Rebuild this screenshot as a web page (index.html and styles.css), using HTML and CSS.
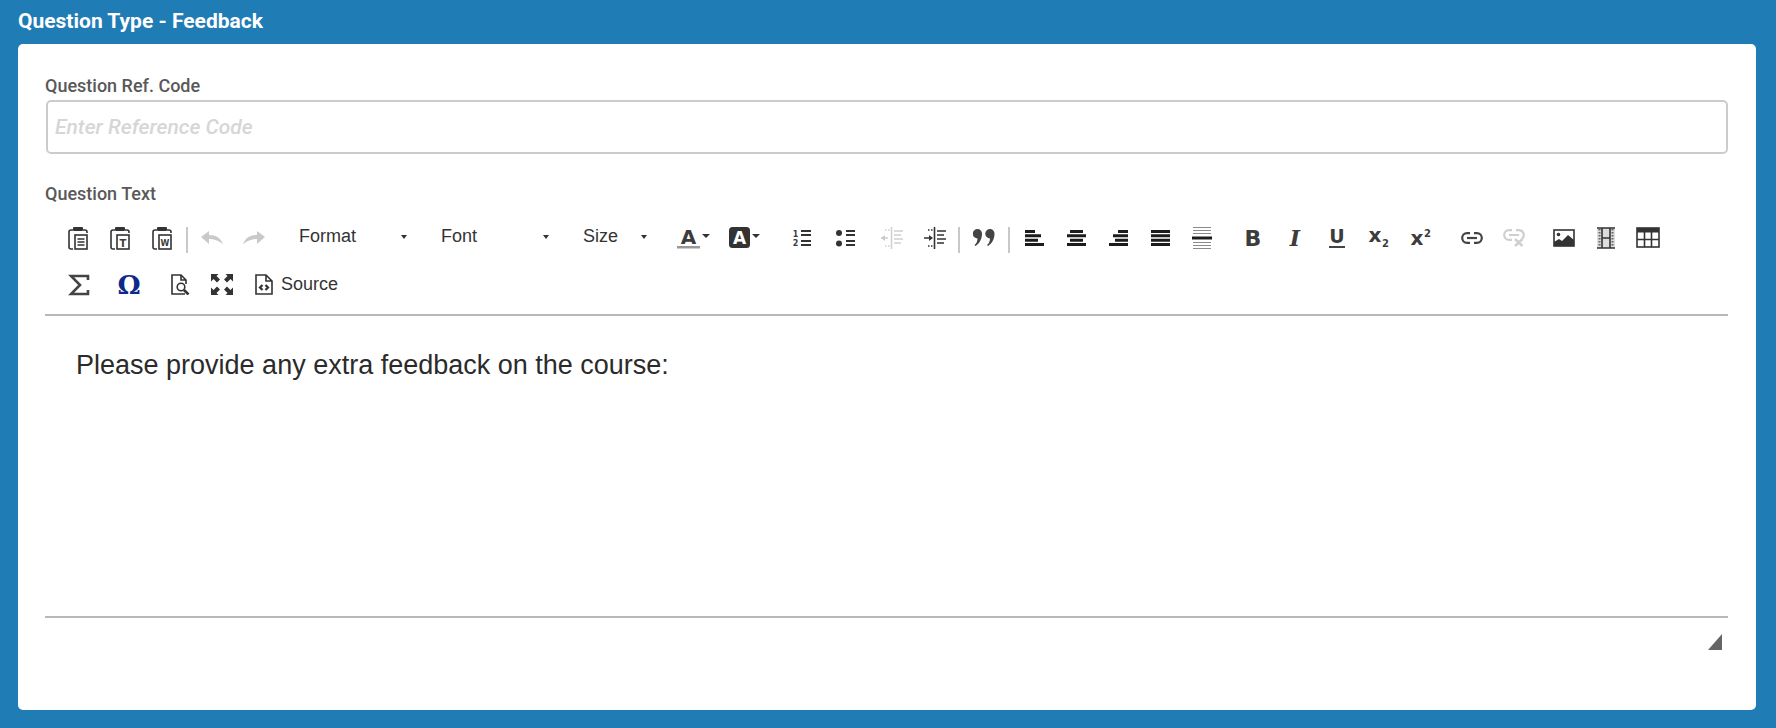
FILE: index.html
```html
<!DOCTYPE html>
<html lang="en">
<head>
    <meta charset="UTF-8">
    <title>Question Type - Feedback</title>
    <link rel="stylesheet" href="styles.css">
</head>
<body>
    <header class="page-title">Question Type - Feedback</header>
    <main class="card">
        <div class="field">
            <label for="ref-code">Question Ref. Code</label>
            <input type="text" id="ref-code" placeholder="Enter Reference Code">
        </div>
        <div class="field-label">Question Text</div>
        <div class="editor">
            <div class="toolbar">
                <div class="tb-row">
                    <span class="btn"><svg width="24" height="26" viewBox="0 0 24 26"><path class="ln" d="M6 5H4a2 2 0 0 0-2 2v15a2 2 0 0 0 2 2h2M16 5h2a2 2 0 0 1 2 2v1"/><rect class="fl" x="6" y="2" width="10" height="4" rx="1"/><rect class="ln" x="8" y="10" width="12" height="14"/><path class="ln" d="M10.500 14h7M10.500 17h7M10.500 20h7"/></svg></span>
                    <span class="btn"><svg width="24" height="26" viewBox="0 0 24 26"><path class="ln" d="M6 5H4a2 2 0 0 0-2 2v15a2 2 0 0 0 2 2h2M16 5h2a2 2 0 0 1 2 2v1"/><rect class="fl" x="6" y="2" width="10" height="4" rx="1"/><rect class="ln" x="8" y="10" width="12" height="14"/><text class="gl" x="14" y="21.500" font-size="10" text-anchor="middle">T</text></svg></span>
                    <span class="btn"><svg width="24" height="26" viewBox="0 0 24 26"><path class="ln" d="M6 5H4a2 2 0 0 0-2 2v15a2 2 0 0 0 2 2h2M16 5h2a2 2 0 0 1 2 2v1"/><rect class="fl" x="6" y="2" width="10" height="4" rx="1"/><rect class="ln" x="8" y="10" width="12" height="14"/><text class="gl" x="14" y="21" font-size="8" text-anchor="middle">W</text></svg></span>
                    <span class="sep sep-a"></span>
                    <span class="btn"><svg width="22" height="14" viewBox="0 0 22 14"><path class="off" d="M0 6 8 0v4c7 0 12 3 14 9.500C18 9.500 13 8 8 8v5z"/></svg></span>
                    <span class="btn"><svg width="22" height="14" viewBox="0 0 22 14"><path class="off" d="M22 6 14 0v4C7 4 2 7 0 13.500 4 9.500 9 8 14 8v5z"/></svg></span>
                    <span class="combo combo-format">Format<i class="caret"></i></span>
                    <span class="combo combo-font">Font<i class="caret"></i></span>
                    <span class="combo combo-size">Size<i class="caret"></i></span>
                    <span class="color-btn color-text"><svg width="23" height="30" viewBox="0 -4 23 30"><text class="gl" x="11.500" y="17" font-size="20" text-anchor="middle">A</text><rect x="0" y="19" width="23" height="2.500" fill="#999"/></svg><i class="caret"></i></span>
                    <span class="color-btn color-bg"><svg width="21" height="21" viewBox="0 0 21 21"><rect width="21" height="21" rx="3.500" fill="#333"/><text x="10.500" y="16.500" font-size="17" text-anchor="middle" class="gl gl-white">A</text></svg><i class="caret"></i></span>
                    <span class="btn"><svg width="18" height="18" viewBox="0 0 18 18"><text class="gl" x="2.500" y="7.500" font-size="8" text-anchor="middle">1</text><text class="gl" x="2.500" y="17" font-size="8" text-anchor="middle">2</text><path class="ln2" d="M8 2h10M8 6h10M8 12h10M8 16h10"/></svg></span>
                    <span class="btn btn-ul"><svg width="19" height="18" viewBox="0 0 19 18"><circle class="fl" cx="3" cy="4" r="3"/><circle class="fl" cx="3" cy="14.500" r="3"/><path class="ln2" d="M10 2h9M10 6h9M10 12h9M10 16h9"/></svg></span>
                    <span class="btn btn-outdent"><svg width="22" height="22" viewBox="0 0 22 22"><path class="ln-off" d="M10.500 0v22M13 4h9M13 8h7M13 12h9M13 16h7M0 11h7"/><path class="off" d="M0 11l4-3v6z"/><path class="ln-off dots" d="M4 3h5M4 19h5"/></svg></span>
                    <span class="btn btn-indent"><svg width="22" height="22" viewBox="0 0 22 22"><path class="ln" d="M10.500 0v22M13 4h9M13 8h7M13 12h9M13 16h7M0 11h6"/><path class="fl" d="M9 11l-4-3v6z"/><path class="ln dots" d="M4 3h5M4 19h5"/></svg></span>
                    <span class="sep sep-b"></span>
                    <span class="btn btn-quote"><svg width="22" height="17" viewBox="0 0 22 17"><path class="quote" d="M4.500 0a4.500 4.500 0 0 1 4.500 4.800C9 10.500 6 15 2.500 17L1.500 16c2-1.500 3-4 3-6.500a4.700 4.700 0 0 1 0-9.500zM17 0a4.500 4.500 0 0 1 4.500 4.800c0 5.700-3 10.200-6.500 12.200L14 16c2-1.500 3-4 3-6.500A4.700 4.700 0 0 1 17 0z"/></svg></span>
                    <span class="sep sep-c"></span>
                    <span class="btn btn-left"><svg width="19" height="16" viewBox="0 0 19 16"><path class="bar" d="M0 1.500h10M0 5.800h16M0 10.200h13M0 14.500h19"/></svg></span>
                    <span class="btn"><svg width="19" height="16" viewBox="0 0 19 16"><path class="bar" d="M3 1.500h13M0 5.800h19M3 10.200h13M0 14.500h19"/></svg></span>
                    <span class="btn"><svg width="19" height="16" viewBox="0 0 19 16"><path class="bar" d="M9 1.500h10M4 5.800h15M6 10.200h13M0 14.500h19"/></svg></span>
                    <span class="btn"><svg width="19" height="16" viewBox="0 0 19 16"><path class="bar" d="M0 1.500h19M0 5.800h19M0 10.200h19M0 14.500h19"/></svg></span>
                    <span class="btn"><svg width="20" height="22" viewBox="0 0 20 22"><path class="thin" d="M1 .5h18M1 3.500h18M1 6.500h18M1 15.500h18M1 18.500h18M1 21.500h18"/><path class="bar" d="M0 11h20"/></svg></span>
                    <span class="btn btn-b"><svg width="22" height="30" viewBox="0 -4 22 30"><text class="gl" x="11" y="19" font-size="22" text-anchor="middle">B</text></svg></span>
                    <span class="btn"><svg width="22" height="30" viewBox="0 -4 22 30"><text class="gl gl-it" x="11" y="19" font-size="22" text-anchor="middle">I</text></svg></span>
                    <span class="btn"><svg width="22" height="30" viewBox="0 -4 22 30"><text class="gl" x="11" y="16" font-size="19" text-anchor="middle">U</text><rect x="3" y="19" width="16" height="2" fill="#444"/></svg></span>
                    <span class="btn"><svg width="22" height="30" viewBox="0 -4 22 30"><text class="gl" x="7" y="15" font-size="20" text-anchor="middle">x</text><text class="gl" x="17.500" y="20" font-size="10" text-anchor="middle">2</text></svg></span>
                    <span class="btn"><svg width="22" height="30" viewBox="0 -4 22 30"><text class="gl" x="7" y="18" font-size="20" text-anchor="middle">x</text><text class="gl" x="17.500" y="9.500" font-size="10" text-anchor="middle">2</text></svg></span>
                    <span class="btn btn-link"><svg width="22" height="12" viewBox="0 0 22 12"><path class="chain" d="M9 1.200H6a4.800 4.800 0 0 0 0 9.600h3M13 1.200h3a4.800 4.800 0 0 1 0 9.600h-3"/><path class="chain" d="M6 6h10"/></svg></span>
                    <span class="btn"><svg width="22" height="18" viewBox="0 0 22 18"><path class="chain chain-off" d="M9 1.200H6a4.800 4.800 0 0 0 0 9.600h3M13 1.200h3a4.800 4.800 0 0 1 3 8.500M6 6h10"/><path class="x-off" d="M12 10l7.500 7M19.500 10L12 17"/></svg></span>
                    <span class="btn btn-image"><svg width="22" height="18" viewBox="0 0 22 18"><rect class="ln" x="1" y="1" width="20" height="16"/><circle class="fl" cx="5.500" cy="5.500" r="1.800"/><path class="fl" d="M1 17v-4l5-3 3 2 6-6 6 5v6z"/></svg></span>
                    <span class="btn"><svg width="20" height="22" viewBox="0 0 20 22"><rect class="film-strip" x="1" y="1" width="18" height="20"/><path class="ln" d="M6 1v20M14 1v20M6 11h8M1 1h18M1 21h18"/><path class="film" d="M3.500 2v18M16.500 2v18"/></svg></span>
                    <span class="btn"><svg width="24" height="21" viewBox="0 0 24 21"><rect class="ln" x="1" y="1" width="22" height="19"/><rect class="fl" x="1" y="1" width="22" height="4.500"/><path class="ln" d="M1 12.500h22M8.500 5v15M15.500 5v15"/></svg></span>
                </div>
                <div class="tb-row">
                    <span class="btn"><svg width="22" height="22" viewBox="0 0 22 22"><path class="sigma" d="M20 6V2H3l9 9-9 9h17v-4"/></svg></span>
                    <span class="btn btn-omega"><svg width="26" height="32" viewBox="0 -4 26 32"><text class="gl gl-blue" x="13" y="20.500" font-size="26" text-anchor="middle">Ω</text></svg></span>
                    <span class="btn btn-preview"><svg width="19" height="21" viewBox="0 0 19 21"><path class="ln" d="M14 20H1V1h9l5 5v4M10 1v5h5"/><circle class="ln" cx="10" cy="13" r="3.800"/><path class="ln-thick" d="M13 16l4.500 4.500"/></svg></span>
                    <span class="btn"><svg width="22" height="21" viewBox="0 0 22 21"><path class="fl" d="M0 0h7.500L5.500 2l3.500 3.500-3 3L2.500 5 0 7.500zM22 0v7.500L19.500 5 16 8.500l-3-3L16.500 2 14.500 0zM0 21v-7.500L2.500 16 6 12.500l3 3L5.500 19l2 2zM22 21h-7.500l2-2-3.500-3.500 3-3 3.500 3.500 2.500-2.500z"/></svg></span>
                    <span class="source-btn"><svg width="18" height="21" viewBox="0 0 18 21"><path class="ln" d="M1 1h10l6 6v13H1zM11 1v6h6"/><path class="ln-bold" d="M7.500 11l-2.500 2.500 2.500 2.500M10.500 11l2.500 2.500-2.500 2.500"/></svg>Source</span>
                </div>
            </div>
            <div class="content">
                <p>Please provide any extra feedback on the course:</p>
            </div>
            <div class="editor-foot"><i class="resizer"></i></div>
        </div>
    </main>
</body>
</html>
```

FILE: styles.css
```css
body {
    margin: 0;
    height: 728px;
    overflow: hidden;
    background-color: #1f7cb4;
    font-family: Roboto, sans-serif;
}

.page-title {
    height: 44px;
    padding-left: 18px;
    line-height: 42px;
    color: white;
    font-size: 21px;
    font-weight: 700;
    box-sizing: border-box;
}

.card {
    height: 666px;
    margin: 0 20px 0 18px;
    padding: 32px 28px 0 27px;
    background-color: white;
    border-radius: 5px;
    box-sizing: border-box;
}

.field {
    margin-bottom: 30px;
}

.field label,
.field-label {
    display: block;
    height: 20px;
    line-height: 20px;
    color: #595959;
    font-size: 18px;
    font-weight: 500;
}

.field input {
    display: block;
    width: calc(100% - 1px);
    height: 54px;
    margin: 4px 0 0 1px;
    padding: 0 7px;
    border: 2px solid #ccc;
    border-radius: 5px;
    box-sizing: border-box;
    font-family: Roboto, sans-serif;
    font-size: 21px;
    font-style: italic;
    font-weight: 500;
}

.field input::placeholder {
    color: #d6d6d6;
    opacity: 1;
}

.toolbar {
    margin-top: 10px;
    padding: 0 0 6px 13px;
    border-bottom: 2px solid #b8b8b8;
    color: #333;
    font-family: "Liberation Sans", Arial, sans-serif;
    font-size: 18px;
}

.tb-row {
    display: flex;
    align-items: center;
    height: 47px;
}

.btn {
    display: flex;
    flex: none;
    align-items: center;
    justify-content: center;
    width: 42px;
}

.sep {
    flex: none;
    width: 2px;
    height: 26px;
    margin-top: 4px;
    background-color: #c8c8c8;
}

.sep-a { margin-left: 2px; margin-right: 3px; }
.sep-b { margin-left: 2px; margin-right: 3px; }
.sep-c { margin-left: 3px; margin-right: 3px; }

.btn-ul { margin-left: 1px; }
.btn-outdent { margin-left: 5px; }
.btn-indent { margin-left: 1px; }
.btn-b { margin-left: 9px; }
.btn-link { margin-left: 9px; }
.btn-image { margin-left: 8px; }
.btn-omega { margin-left: 8px; }
.btn-preview { margin-left: 9px; }

.combo {
    display: flex;
    flex: none;
    align-items: center;
    justify-content: space-between;
    height: 47px;
    padding-bottom: 2px;
    box-sizing: border-box;
}

.combo-format { width: 145px; padding-left: 24px; padding-right: 13px; }
.combo-font { width: 142px; padding-left: 21px; padding-right: 13px; }
.combo-size { width: 98px; padding-left: 21px; padding-right: 13px; }

.caret {
    display: block;
    width: 0;
    height: 0;
    border-top: 4px solid #333;
    border-left: 3.500px solid transparent;
    border-right: 3.500px solid transparent;
}

.color-btn {
    display: flex;
    flex: none;
    align-items: center;
    gap: 2px;
}

.color-text { width: 37px; padding-left: 17px; }
.color-bg { width: 52px; padding-left: 15px; }

.color-btn .caret {
    margin-top: -4px;
    border-top-width: 4.500px;
    border-left-width: 4px;
    border-right-width: 4px;
}

.source-btn {
    display: flex;
    align-items: center;
    gap: 8px;
    padding-left: 12px;
}

.content {
    height: 302px;
    padding: 31px 0 0 31px;
    border-bottom: 2px solid #b8b8b8;
    box-sizing: border-box;
    color: #2b2b2b;
    font-family: "Liberation Sans", Arial, sans-serif;
    font-size: 27px;
}

.content p {
    margin: 0;
    line-height: 36px;
}

.editor-foot {
    display: flex;
    justify-content: flex-end;
    padding: 16px 6px 0 0;
}

.resizer {
    display: block;
    width: 14px;
    height: 16px;
    background-color: #666;
    clip-path: polygon(100% 0, 100% 100%, 0 100%);
}

/* toolbar icon parts */
.ln { fill: none; stroke: #333; stroke-width: 1.600; }
.ln2 { fill: none; stroke: #333; stroke-width: 1.900; }
.ln-bold { fill: none; stroke: #333; stroke-width: 2.200; }
.ln-thick { fill: none; stroke: #333; stroke-width: 2.600; }
.ln-off { fill: none; stroke: #cfcfcf; stroke-width: 1.500; }
.fl { fill: #333; }
.off { fill: #c9c9c9; }
.quote { fill: #444; }
.bar { fill: none; stroke: #1c1c1c; stroke-width: 3; }
.thin { fill: none; stroke: #8a8a8a; stroke-width: 1; }
.dots { stroke-dasharray: 1.500 1.500; }
.film { fill: none; stroke: #666; stroke-width: 2; stroke-dasharray: 1.500 1.500; }
.film-strip { fill: #ddd; stroke: none; }
.chain { fill: none; stroke: #444; stroke-width: 2.200; }
.chain-off { stroke: #cfcfcf; }
.x-off { fill: none; stroke: #cfcfcf; stroke-width: 2.400; }
.sigma { fill: none; stroke: #444; stroke-width: 2.600; }

.gl {
    fill: #3c3c3c;
    font-family: "DejaVu Sans", sans-serif;
    font-weight: 700;
}

.gl-white { fill: white; }
.gl-blue { fill: #0c2a8a; font-family: "DejaVu Serif", serif; }
.gl-it { font-family: "DejaVu Serif", serif; font-style: italic; }
```
